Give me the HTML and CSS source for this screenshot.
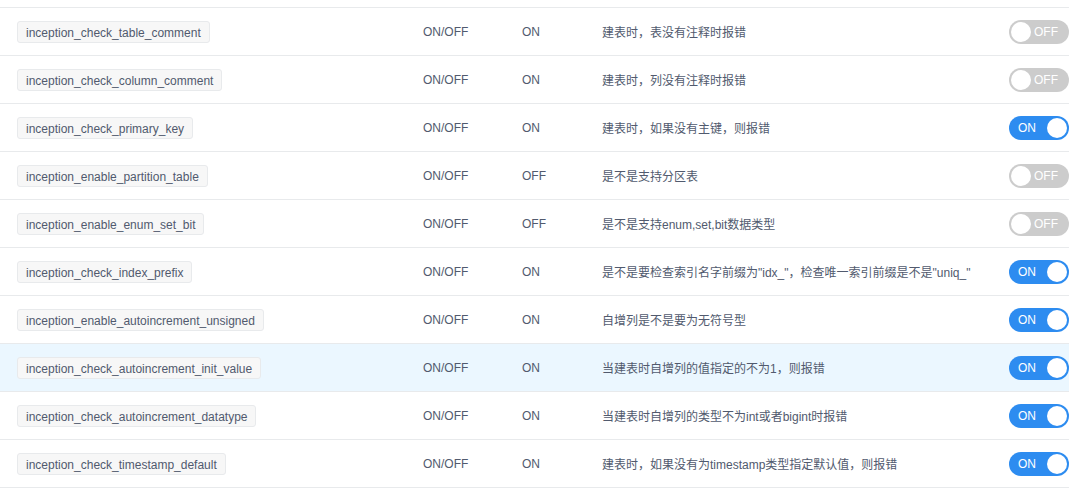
FILE: index.html
```html
<!DOCTYPE html>
<html lang="zh">
<head>
<meta charset="utf-8">
<link rel="stylesheet" href="styles.css">
</head>
<body>
<div class="table">
  <div class="prev-row"></div>
  <div class="row"><div class="c1"><span class="tag">inception_check_table_comment</span></div><div class="c2">ON/OFF</div><div class="c3">ON</div><div class="c4">建表时，表没有注释时报错</div><div class="c5"><span class="switch off"><span class="txt">OFF</span><span class="knob"></span></span></div></div>
  <div class="row"><div class="c1"><span class="tag">inception_check_column_comment</span></div><div class="c2">ON/OFF</div><div class="c3">ON</div><div class="c4">建表时，列没有注释时报错</div><div class="c5"><span class="switch off"><span class="txt">OFF</span><span class="knob"></span></span></div></div>
  <div class="row"><div class="c1"><span class="tag">inception_check_primary_key</span></div><div class="c2">ON/OFF</div><div class="c3">ON</div><div class="c4">建表时，如果没有主键，则报错</div><div class="c5"><span class="switch on"><span class="txt">ON</span><span class="knob"></span></span></div></div>
  <div class="row"><div class="c1"><span class="tag">inception_enable_partition_table</span></div><div class="c2">ON/OFF</div><div class="c3">OFF</div><div class="c4">是不是支持分区表</div><div class="c5"><span class="switch off"><span class="txt">OFF</span><span class="knob"></span></span></div></div>
  <div class="row"><div class="c1"><span class="tag">inception_enable_enum_set_bit</span></div><div class="c2">ON/OFF</div><div class="c3">OFF</div><div class="c4">是不是支持enum,set,bit数据类型</div><div class="c5"><span class="switch off"><span class="txt">OFF</span><span class="knob"></span></span></div></div>
  <div class="row"><div class="c1"><span class="tag">inception_check_index_prefix</span></div><div class="c2">ON/OFF</div><div class="c3">ON</div><div class="c4">是不是要检查索引名字前缀为"idx_"，检查唯一索引前缀是不是"uniq_"</div><div class="c5"><span class="switch on"><span class="txt">ON</span><span class="knob"></span></span></div></div>
  <div class="row"><div class="c1"><span class="tag">inception_enable_autoincrement_unsigned</span></div><div class="c2">ON/OFF</div><div class="c3">ON</div><div class="c4">自增列是不是要为无符号型</div><div class="c5"><span class="switch on"><span class="txt">ON</span><span class="knob"></span></span></div></div>
  <div class="row hover"><div class="c1"><span class="tag">inception_check_autoincrement_init_value</span></div><div class="c2">ON/OFF</div><div class="c3">ON</div><div class="c4">当建表时自增列的值指定的不为1，则报错</div><div class="c5"><span class="switch on"><span class="txt">ON</span><span class="knob"></span></span></div></div>
  <div class="row"><div class="c1"><span class="tag">inception_check_autoincrement_datatype</span></div><div class="c2">ON/OFF</div><div class="c3">ON</div><div class="c4">当建表时自增列的类型不为int或者bigint时报错</div><div class="c5"><span class="switch on"><span class="txt">ON</span><span class="knob"></span></span></div></div>
  <div class="row"><div class="c1"><span class="tag">inception_check_timestamp_default</span></div><div class="c2">ON/OFF</div><div class="c3">ON</div><div class="c4">建表时，如果没有为timestamp类型指定默认值，则报错</div><div class="c5"><span class="switch on"><span class="txt">ON</span><span class="knob"></span></span></div></div>
</div>
</body>
</html>
```
FILE: styles.css
```css
html, body {
  margin: 0;
  padding: 0;
  background: #fff;
  overflow: hidden;
}
body {
  font-family: "Liberation Sans", "Noto Sans CJK SC", sans-serif;
  font-size: 12px;
  color: #515a6e;
}
.table {
  width: 1069px;
}
.prev-row {
  height: 7px;
  border-bottom: 1px solid #e8eaec;
}
.row {
  display: grid;
  grid-template-columns: 423px 99px 80px 407px 60px;
  height: 47px;
  align-items: center;
  border-bottom: 1px solid #e8eaec;
  white-space: nowrap;
}
.row.hover {
  background: #ebf7ff;
}
.c1 {
  padding-left: 17px;
  display: flex;
  align-items: center;
}
.tag {
  display: inline-block;
  height: 22px;
  line-height: 22px;
  padding: 0 8px;
  background: #f7f7f7;
  border: 1px solid #e8eaec;
  border-radius: 3px;
  box-sizing: border-box;
  color: #515a6e;
  font-size: 12px;
}
.c5 {
  display: flex;
  align-items: center;
}
.switch {
  position: relative;
  display: inline-block;
  width: 60px;
  height: 24px;
  border-radius: 12px;
  box-sizing: border-box;
  color: #fff;
  font-size: 12px;
  line-height: 24px;
}
.switch.off {
  background: #ccc;
}
.switch.on {
  background: #2d8cf0;
}
.switch .txt {
  position: absolute;
  top: 0;
}
.switch.off .txt {
  left: 25px;
}
.switch.on .txt {
  left: 9px;
}
.switch .knob {
  position: absolute;
  top: 2px;
  width: 20px;
  height: 20px;
  border-radius: 50%;
  background: #fff;
}
.switch.off .knob {
  left: 2px;
}
.switch.on .knob {
  left: 38px;
}
```
